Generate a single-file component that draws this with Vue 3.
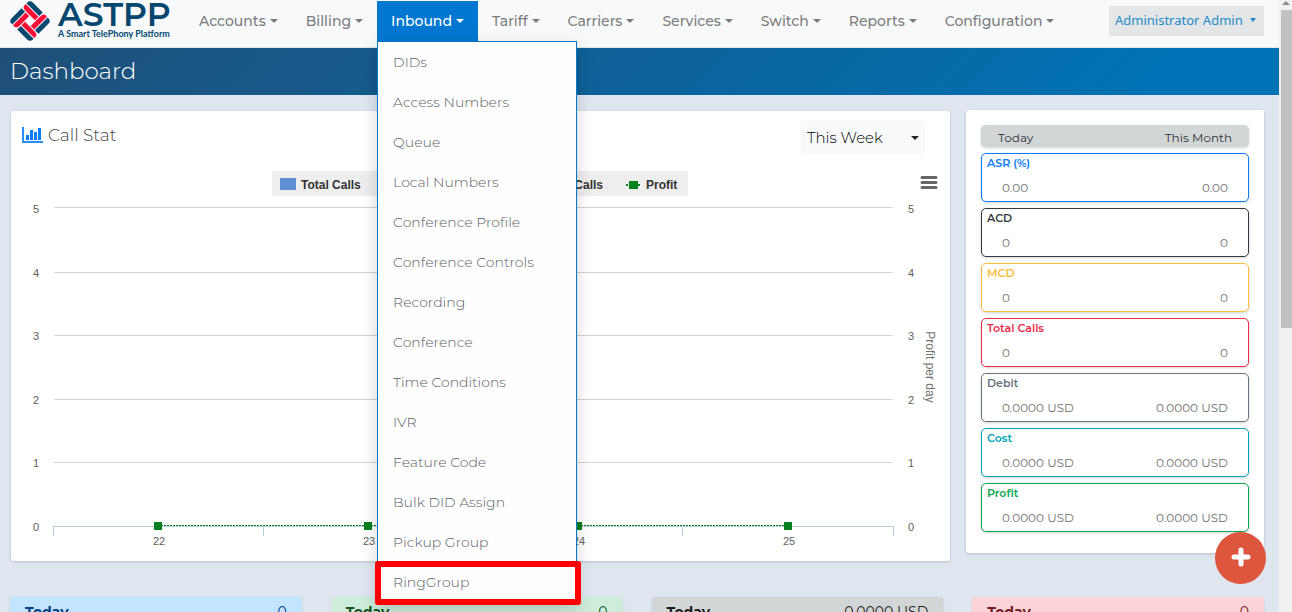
<script setup>
const menus = [
  { label: 'Accounts' },
  { label: 'Billing' },
  {
    label: 'Inbound',
    items: [
      'DIDs', 'Access Numbers', 'Queue', 'Local Numbers', 'Conference Profile',
      'Conference Controls', 'Recording', 'Conference', 'Time Conditions', 'IVR',
      'Feature Code', 'Bulk DID Assign', 'Pickup Group', 'RingGroup',
    ],
  },
  { label: 'Tariff' },
  { label: 'Carriers' },
  { label: 'Services' },
  { label: 'Switch' },
  { label: 'Reports' },
  { label: 'Configuration' },
]

const stats = [
  { name: 'ASR (%)', today: '0.00', month: '0.00', tone: 'blue' },
  { name: 'ACD', today: '0', month: '0', tone: 'dark' },
  { name: 'MCD', today: '0', month: '0', tone: 'amber' },
  { name: 'Total Calls', today: '0', month: '0', tone: 'red' },
  { name: 'Debit', today: '0.0000 USD', month: '0.0000 USD', tone: 'grey' },
  { name: 'Cost', today: '0.0000 USD', month: '0.0000 USD', tone: 'teal' },
  { name: 'Profit', today: '0.0000 USD', month: '0.0000 USD', tone: 'green' },
]

const tiles = [
  { value: '0', tone: 'sky' },
  { value: '0', tone: 'mint' },
  { value: '0.0000 USD', tone: 'stone' },
  { value: '0', tone: 'rose' },
]

const levels = [
  { value: 5, y: 47, baseline: 53 },
  { value: 4, y: 112, baseline: 117 },
  { value: 3, y: 175, baseline: 180 },
  { value: 2, y: 239, baseline: 244 },
  { value: 1, y: 302, baseline: 307 },
  { value: 0, y: 366, baseline: 371 },
]
const days = [
  { day: 22, x: 147 },
  { day: 23, x: 357 },
  { day: 24, x: 567 },
  { day: 25, x: 777 },
]
const ticks = [42, 252, 462, 671, 882]
</script>

<template>
  <div class="shell">
    <div class="page">
      <header class="topbar">
        <a class="brand" href="#" aria-label="ASTPP">
          <svg class="logo" viewBox="0 0 162 44" aria-hidden="true">
            <g transform="translate(20 21) rotate(45)">
              <g v-for="turn in [0, 90, 180, 270]" :key="turn" :transform="`rotate(${turn})`">
                <path d="M-11-15H3V-10H-15V-11Q-15-15-11-15Z" fill="#05476f" />
                <path d="M-15-9H3V-4H-10Q-15-4-15-7Z" fill="#fb0c37" />
              </g>
            </g>
            <text x="48" y="26" class="word">ASTPP</text>
            <text x="48" y="37" class="tagline">A Smart TelePhony Platform</text>
          </svg>
        </a>
        <nav class="nav">
          <div v-for="menu in menus" :key="menu.label" class="nav-item">
            <button type="button" class="nav-link" :class="{ open: menu.items }">
              {{ menu.label }}<span class="caret"></span>
            </button>
            <div v-if="menu.items" class="dropdown">
              <a v-for="item in menu.items" :key="item" href="#">{{ item }}</a>
            </div>
          </div>
        </nav>
        <button type="button" class="user">Administrator Admin<span class="caret"></span></button>
      </header>

      <div class="titlebar"><h1>Dashboard</h1></div>

      <main class="content">
        <section class="card chart-card">
          <div class="chart-head">
            <svg class="bars" viewBox="0 0 21 16" aria-hidden="true">
              <path d="M1 0V15H21" fill="none" stroke="#2a8cff" stroke-width="2" />
              <path d="M4 8h3v5H4zM8 3h3v10H8zM12 5h3v8h-3zM16 1h3v12h-3z" fill="#0a7cff" />
            </svg>
            <h2>Call Stat</h2>
            <label class="range">
              <select aria-label="Period">
                <option>This Week</option>
              </select>
              <span class="caret"></span>
            </label>
          </div>
          <svg class="chart" viewBox="0 0 939 401">
            <rect x="261" y="11" width="416" height="25" fill="#eee" />
            <rect x="269" y="18" width="16" height="12" fill="#628ed3" />
            <g class="legend">
              <text x="290" y="29">Total Calls</text>
              <text x="592" y="29" text-anchor="end">Failed Calls</text>
              <text x="635" y="29">Profit</text>
            </g>
            <path d="M615 25h14" stroke="#058021" stroke-width="2" stroke-dasharray="2 1" />
            <rect x="618" y="21" width="9" height="8" fill="#058021" />
            <path d="M911 17.500h14M911 22.500h14M911 27.500h14" stroke="#666" stroke-width="3" stroke-linecap="round" />
            <g v-for="level in levels" :key="level.value">
              <rect x="43" :y="level.y" width="839" height="1" :fill="level.value ? '#d4d4d4' : '#b8ccda'" />
              <text class="axis" x="28" :y="level.baseline" text-anchor="end">{{ level.value }}</text>
              <text class="axis" x="897" :y="level.baseline">{{ level.value }}</text>
            </g>
            <rect v-for="x in ticks" :key="x" :x="x" y="366" width="1" height="10" fill="#b8ccda" />
            <path d="M147 365.500H777" stroke="#058021" stroke-dasharray="2 1" />
            <g v-for="point in days" :key="point.day">
              <rect :x="point.x - 4" y="362" width="8" height="8" fill="#058021" />
              <text class="axis" :x="point.x + 1" y="385" text-anchor="middle">{{ point.day }}</text>
            </g>
            <text class="axis-title" transform="translate(915 207) rotate(90)" text-anchor="middle">Profit per day</text>
          </svg>
        </section>

        <aside class="card summary">
          <div class="summary-head"><span>Today</span><span>This Month</span></div>
          <div v-for="stat in stats" :key="stat.name" class="stat" :class="stat.tone">
            <h3>{{ stat.name }}</h3>
            <div class="values"><span>{{ stat.today }}</span><span>{{ stat.month }}</span></div>
          </div>
        </aside>
      </main>

      <section class="tiles">
        <div v-for="tile in tiles" :key="tile.tone" class="tile" :class="tile.tone">
          <strong>Today</strong><span>{{ tile.value }}</span>
        </div>
      </section>

      <button type="button" class="fab" aria-label="Add">
        <svg viewBox="0 0 20 20" aria-hidden="true">
          <path d="M10 3V17M3 10H17" stroke="#fff" stroke-width="5" stroke-linecap="round" />
        </svg>
      </button>
    </div>
    <div class="scrollbar" aria-hidden="true"><i class="arrow"></i><i class="thumb"></i></div>
  </div>
</template>

<style>
body {
  margin: 0;
  overflow: hidden;
}
</style>

<style scoped>
* {
  box-sizing: border-box;
}

.shell {
  display: grid;
  grid-template-columns: 1fr 13px;
  height: 100vh;
  overflow: hidden;
  font-family: Montserrat, Inter, "Open Sans", sans-serif;
  font-size: 14px;
  color: #555;
  background: #dfe6f0;
}

.page {
  position: relative;
  min-width: 0;
  overflow: hidden;
}

button {
  font: inherit;
  border: 0;
  padding: 0;
  cursor: pointer;
}

a {
  color: inherit;
  text-decoration: none;
}

.caret {
  display: inline-block;
  border: 4px solid transparent;
  border-top-color: currentColor;
  border-bottom: 0;
}

.topbar {
  display: flex;
  align-items: flex-start;
  height: 48px;
  padding: 0 15px 0 10px;
  background: #f8f9fb;
  border-bottom: 1px solid #dde6ea;
}

.brand {
  flex: 0 0 175px;
}

.logo {
  display: block;
  width: 162px;
  height: 44px;
  overflow: visible;
}

.word {
  font-size: 33px;
  font-weight: 600;
  fill: #05476f;
}

.tagline {
  font: 700 9px Lato, sans-serif;
  fill: #05476f;
}

.nav {
  display: flex;
  margin-top: 1px;
}

.nav-item {
  position: relative;
}

.nav-link {
  display: flex;
  align-items: center;
  gap: 4px;
  width: 100%;
  height: 40px;
  padding: 0 14px;
  font-size: 14px;
  font-weight: 500;
  color: #7d7d7d;
  background: none;
  white-space: nowrap;
}

.nav-link.open {
  color: #fff;
  background: #0077d0;
}

.dropdown {
  position: absolute;
  z-index: 5;
  top: 100%;
  left: 0;
  width: 200px;
  background: #fefefe;
  border: 1px solid #0077c8;
  box-shadow: 0 6px 16px rgba(0, 0, 0, 0.18);
}

.dropdown a {
  position: relative;
  display: block;
  padding: 0 15px;
  font-size: 14px;
  font-weight: 300;
  line-height: 40px;
  color: #5c6066;
}

.dropdown a:last-child::after {
  content: "";
  position: absolute;
  inset: -1px -5px -3px -3px;
  border: 6px solid #fe0000;
  border-radius: 3px;
}

.user {
  display: flex;
  align-items: center;
  justify-content: space-between;
  width: 155px;
  height: 30px;
  margin: 6px 0 0 auto;
  padding: 0 8px 2px 6px;
  font-family: "Noto Sans", sans-serif;
  font-size: 13px;
  color: #1e8bcb;
  background: #e3e5e6;
  white-space: nowrap;
}

.user .caret {
  border-width: 4px 3px 0;
}

.titlebar {
  height: 47px;
  padding: 0 10px;
  background: linear-gradient(135deg, #1f4f78, #0072b5 90%);
}

h1 {
  margin: 0;
  font-size: 23px;
  font-weight: 300;
  line-height: 47px;
  color: #fff;
}

.content {
  display: grid;
  grid-template-columns: 939fr 298fr;
  align-items: start;
  gap: 16px;
  padding: 15px 15px 0 11px;
}

.card {
  background: #fff;
  border-radius: 3px;
  box-shadow: 0 1px 3px rgba(0, 0, 0, 0.18);
}

.chart-card {
  margin-top: 1px;
}

.chart-head {
  display: flex;
  align-items: flex-start;
  height: 49px;
  padding: 10px 25px 0 11px;
}

.bars {
  width: 21px;
  height: 16px;
  margin: 6px 5px 0 0;
}

h2 {
  margin: 0;
  font-size: 17px;
  font-weight: 300;
  line-height: 28px;
  color: #444;
}

.range {
  display: flex;
  align-items: center;
  width: 124px;
  height: 33px;
  margin-left: auto;
  padding-right: 6px;
  color: #212529;
  background: #f8f9fb;
  border-radius: 3px;
}

.range select {
  flex: 1;
  height: 33px;
  padding: 0 6px;
  font: inherit;
  font-size: 15px;
  font-weight: 300;
  color: #000;
  appearance: none;
  background: none;
  border: 0;
}

.chart {
  display: block;
  width: 100%;
  font-family: "Liberation Sans", Arial, sans-serif;
}

.legend {
  font-size: 12px;
  font-weight: 700;
  fill: #333;
}

.axis {
  font-size: 11px;
  fill: #606060;
}

.axis-title {
  font-size: 12px;
  fill: #707070;
}

.summary {
  display: grid;
  gap: 6px;
  padding: 15px 15px 21px;
}

.summary-head {
  display: flex;
  justify-content: space-between;
  padding: 3px 17px 0;
  font-size: 12px;
  line-height: 19px;
  color: #2c3033;
  background: #d3d6d7;
  border-radius: 5px;
  box-shadow: 0 1px 3px rgba(0, 0, 0, 0.18);
}

.stat {
  height: 49px;
  border: 1px solid currentColor;
  border-radius: 5px;
  box-shadow: 0 1px 3px rgba(0, 0, 0, 0.18);
}

.stat h3 {
  margin: 0;
  padding: 0 5px;
  font-size: 11px;
  font-weight: 600;
  line-height: 18px;
}

.values {
  display: flex;
  justify-content: space-between;
  padding: 6px 20px 0;
  font-size: 12px;
  line-height: 20px;
  color: #737373;
}

.blue { color: #0a7cff; }
.dark { color: #343a40; }
.amber { color: #ffbd3b; }
.red { color: #ea2b4b; }
.grey { color: #69737c; }
.teal { color: #00a5b8; }
.green { color: #06a650; }

.tiles {
  display: grid;
  grid-template-columns: repeat(4, 1fr);
  gap: 29px;
  padding: 36px 15px 0 10px;
}

.tile {
  display: flex;
  justify-content: space-between;
  padding: 0 15px;
  font-size: 14px;
  line-height: 30px;
  border-radius: 3px 3px 0 0;
  box-shadow: 0 1px 3px rgba(0, 0, 0, 0.12);
}

.sky { color: #004085; background: #c3e4fe; }
.mint { color: #155724; background: #cdecda; }
.stone { color: #1b1e21; background: #d3d6d7; }
.rose { color: #721c24; background: #fcd3d7; }

.fab {
  position: absolute;
  right: 13px;
  bottom: 28px;
  display: grid;
  place-items: center;
  width: 51px;
  height: 52px;
  padding-bottom: 2px;
  background: #dd563d;
  border-radius: 50%;
}

.fab svg {
  width: 20px;
  height: 20px;
}

.scrollbar {
  display: flex;
  flex-direction: column;
  align-items: flex-end;
  background: #f1f1f1;
}

.arrow {
  margin: 1px 2px 5px 0;
  border: 4px solid transparent;
  border-bottom-color: #8e8e8e;
  border-top: 0;
}

.thumb {
  width: 11px;
  height: 52%;
  background: #c1c1c1;
}
</style>
